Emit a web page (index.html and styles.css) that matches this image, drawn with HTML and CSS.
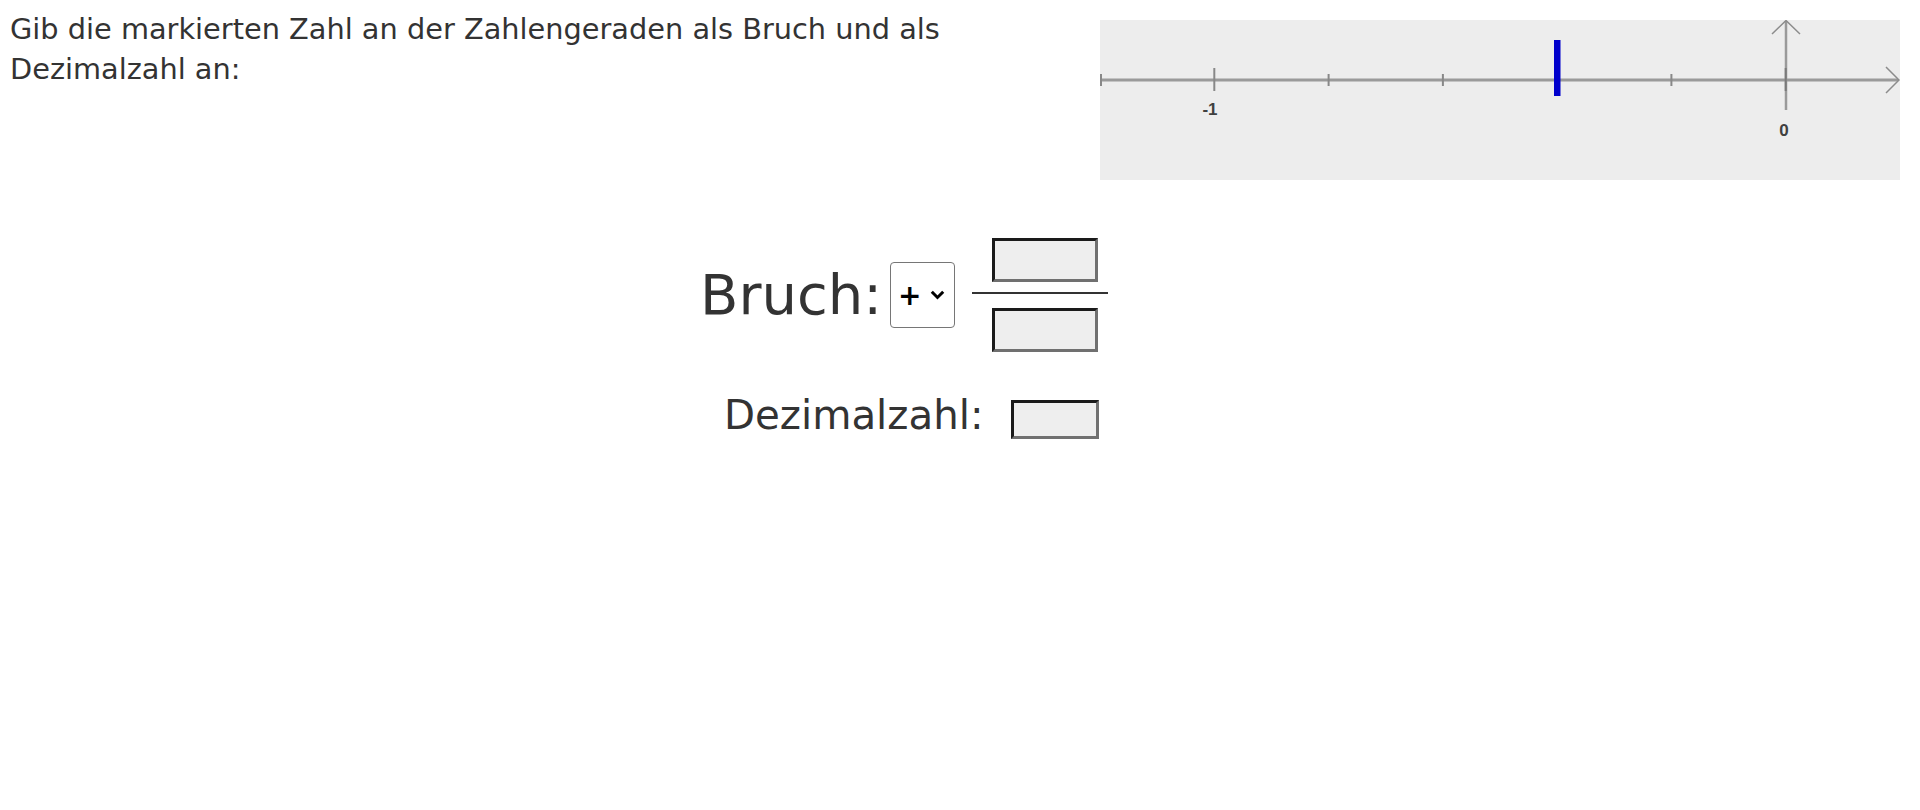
FILE: index.html
```html
<!DOCTYPE html>
<html lang="de">
<head>
<meta charset="utf-8">
<title>Zahlengerade</title>
<link rel="stylesheet" href="styles.css">
</head>
<body>
<div class="top">
  <p class="intro">Gib die markierten Zahl an der Zahlengeraden als Bruch und als Dezimalzahl an:</p>
  <svg class="numberline" width="800" height="160" viewBox="0 0 800 160">
    <rect width="800" height="160" fill="#ededed"/>
    <line x1="0" y1="60" x2="798" y2="60" stroke="#9a9a9a" stroke-width="3"/>
    <polyline points="786,47 799,60 786,73" fill="none" stroke="#8c8c8c" stroke-width="1.5"/>
    <line x1="686" y1="1" x2="686" y2="90" stroke="#9a9a9a" stroke-width="2.5"/>
    <polyline points="672,14 686,0.5 700,14" fill="none" stroke="#8c8c8c" stroke-width="1.5"/>
    <g stroke="#888" stroke-width="2">
      <line x1="1" y1="54" x2="1" y2="66"/>
      <line x1="114.3" y1="48" x2="114.3" y2="71"/>
      <line x1="228.6" y1="54" x2="228.6" y2="66"/>
      <line x1="342.9" y1="54" x2="342.9" y2="66"/>
      <line x1="571.4" y1="54" x2="571.4" y2="66"/>
      <line x1="685.7" y1="48" x2="685.7" y2="71" stroke="#7a7a7a"/>
    </g>
    <rect x="454" y="20" width="6.5" height="56" fill="#0000cc"/>
    <text class="nl-label" x="110" y="95" text-anchor="middle">-1</text>
    <text class="nl-label" x="684" y="116" text-anchor="middle">0</text>
  </svg>
</div>
<div class="form">
  <div class="row row-frac">
    <span class="label-big">Bruch:</span>
    <span class="sign-wrap">
      <select class="sign">
        <option>+</option>
        <option>−</option>
      </select>
      <svg class="chevron" width="15" height="10" viewBox="0 0 15 10"><polyline points="1.8,1.8 7.5,7.5 13.2,1.8" fill="none" stroke="#000" stroke-width="3"/></svg>
    </span>
    <div class="fraction">
      <input class="box box-frac" type="text">
      <div class="bar"></div>
      <input class="box box-frac" type="text">
    </div>
  </div>
  <div class="row row-dec">
    <span class="label-dec">Dezimalzahl:</span>
    <input class="box box-dec" type="text">
  </div>
</div>
</body>
</html>
```
FILE: styles.css
```css
html, body {
  background: #ffffff;
}
body {
  margin: 8px;
  font-family: "DejaVu Sans", Verdana, sans-serif;
  color: #333333;
}
.top {
  display: flex;
  align-items: flex-start;
}
.intro {
  flex: 1;
  margin: 1px 0 0 0;
  padding-left: 2px;
  font-size: 28.8px;
  line-height: 40.3px;
}
.numberline {
  flex: none;
  display: block;
  margin: 12px 12px 0 10px;
}
.nl-label {
  font-family: "Liberation Sans", Arial, sans-serif;
  font-size: 17px;
  font-weight: bold;
  fill: #404040;
}
.form {
  display: flex;
  flex-direction: column;
  margin-top: 58px;
}
.row {
  display: flex;
}
.row-frac {
  align-items: center;
  padding-left: 692px;
}
.label-big {
  font-size: 56px;
  line-height: 66px;
}
.sign-wrap {
  position: relative;
  display: block;
  margin-left: 8px;
}
.sign {
  appearance: none;
  -webkit-appearance: none;
  display: block;
  box-sizing: border-box;
  width: 65px;
  height: 66px;
  margin: 0;
  padding: 0 0 0 7px;
  font-family: "DejaVu Sans", sans-serif;
  font-size: 28px;
  font-weight: bold;
  color: #000;
  background: #fff;
  border: 1px solid #767676;
  border-radius: 4px;
}
.chevron {
  position: absolute;
  left: 40px;
  top: 28px;
  pointer-events: none;
}
.fraction {
  display: flex;
  flex-direction: column;
  align-items: center;
  width: 136px;
  margin-left: 17px;
}
.bar {
  width: 136px;
  height: 2px;
  background: #333;
  margin: 10px 0 14px;
}
.box {
  box-sizing: border-box;
  margin: 0;
  padding: 0;
  background: #eeeeee;
  border-style: solid;
  border-width: 3px;
  border-color: #1a1a1a #707070 #707070 #1a1a1a;
  font-size: 20px;
}
.box-frac {
  width: 106px;
  height: 44px;
  margin-left: 10px;
}
.row-dec {
  align-items: flex-start;
  margin-top: 41px;
  padding-left: 716px;
}
.label-dec {
  font-size: 40.3px;
  line-height: 46px;
}
.box-dec {
  width: 88px;
  height: 39px;
  margin-left: 28px;
  margin-top: 7px;
}
```
